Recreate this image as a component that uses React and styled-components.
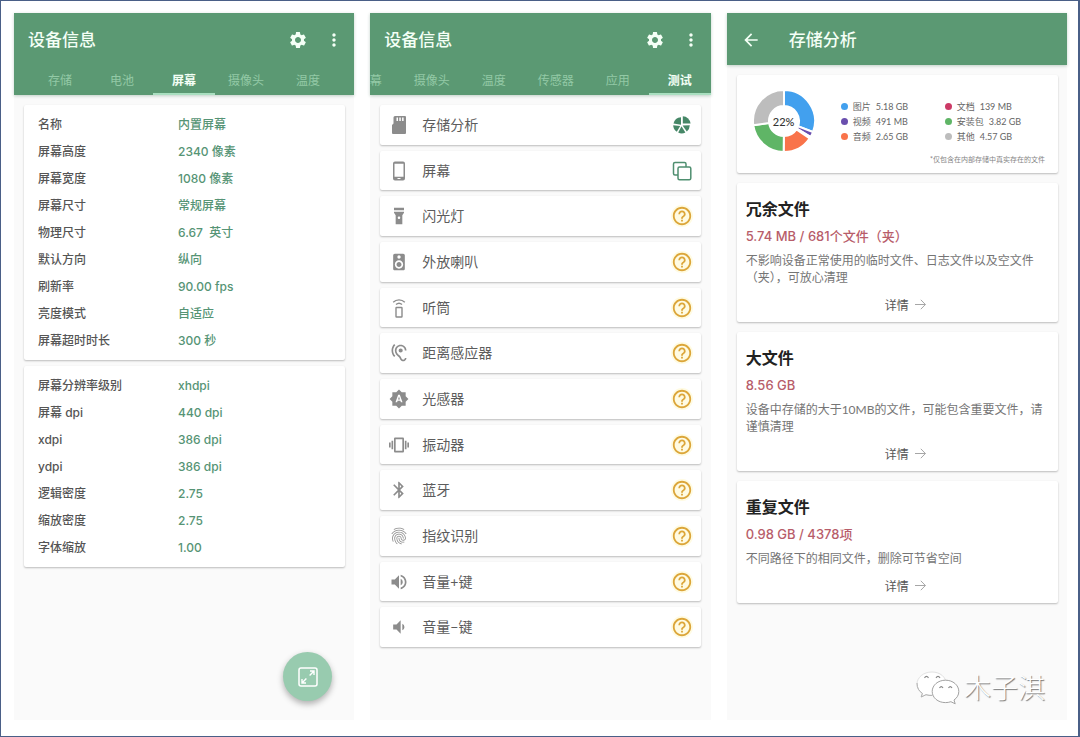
import { useState } from 'react';
import styled, { createGlobalStyle } from 'styled-components';
import {
  MdSettings,
  MdMoreVert,
  MdArrowBack,
  MdFlashlightOn,
  MdSpeaker,
  MdHearing,
  MdBrightnessAuto,
  MdVibration,
  MdBluetooth,
  MdFingerprint,
  MdVolumeUp,
  MdVolumeDown,
  MdHelpOutline,
} from 'react-icons/md';

const SdIcon = () => (
  <svg width="20" height="20" viewBox="0 0 20 20" fill="#8c8c8c" aria-hidden="true">
    <path
      fillRule="evenodd"
      d="M6 1H16Q17 1 17 2V18Q17 19 16 19H4Q3 19 3 18V10L4.500 8.500V2.500Q4.500 1 6 1ZM7.500 2.500V6H9V2.500ZM10.300 2.500V6H11.800V2.500ZM13.100 2.500V6H14.600V2.500Z"
    />
  </svg>
);

const PhoneIcon = () => (
  <svg width="20" height="20" viewBox="0 0 20 20" aria-hidden="true">
    <path
      fill="#8c8c8c"
      fillRule="evenodd"
      d="M6 .5H14Q16 .5 16 2.500V17.500Q16 19.500 14 19.500H6Q4 19.500 4 17.500V2.500Q4 .5 6 .5ZM5.500 2.800V15.800H14.500V2.800ZM8.500 17V18H11.500V17Z"
    />
  </svg>
);

const ReceiverIcon = () => (
  <svg width="20" height="20" viewBox="0 0 20 20" fill="none" stroke="#8c8c8c" aria-hidden="true">
    <rect x="7" y="9.500" width="6" height="9.500" rx="0.5" strokeWidth="1.400" />
    <path d="M7 6.600A4.500 4.500 0 0 1 13 6.600" strokeWidth="1.400" />
    <path d="M4.200 4.200A8.400 8.400 0 0 1 15.800 4.200" strokeWidth="1.400" />
  </svg>
);

const screenInfo = [
  ['名称', '内置屏幕'],
  ['屏幕高度', '2340 像素'],
  ['屏幕宽度', '1080 像素'],
  ['屏幕尺寸', '常规屏幕'],
  ['物理尺寸', '6.67  英寸'],
  ['默认方向', '纵向'],
  ['刷新率', '90.00 fps'],
  ['亮度模式', '自适应'],
  ['屏幕超时时长', '300 秒'],
];

const densityInfo = [
  ['屏幕分辨率级别', 'xhdpi'],
  ['屏幕 dpi', '440 dpi'],
  ['xdpi', '386 dpi'],
  ['ydpi', '386 dpi'],
  ['逻辑密度', '2.75'],
  ['缩放密度', '2.75'],
  ['字体缩放', '1.00'],
];

const tests = [
  { label: '存储分析', Icon: SdIcon, action: 'pie' },
  { label: '屏幕', Icon: PhoneIcon, action: 'copy' },
  { label: '闪光灯', Icon: MdFlashlightOn },
  { label: '外放喇叭', Icon: MdSpeaker },
  { label: '听筒', Icon: ReceiverIcon },
  { label: '距离感应器', Icon: MdHearing },
  { label: '光感器', Icon: MdBrightnessAuto },
  { label: '振动器', Icon: MdVibration },
  { label: '蓝牙', Icon: MdBluetooth },
  { label: '指纹识别', Icon: MdFingerprint },
  { label: '音量+键', Icon: MdVolumeUp },
  { label: '音量−键', Icon: MdVolumeDown },
];

const storage = [
  { name: '图片', size: '5.18 GB', value: 5.18, color: '#42a0ee' },
  { name: '视频', size: '491 MB', value: 0.48, color: '#6a4fae' },
  { name: '文档', size: '139 MB', value: 0.14, color: '#cc3a66' },
  { name: '音频', size: '2.65 GB', value: 2.65, color: '#f9734a' },
  { name: '安装包', size: '3.82 GB', value: 3.82, color: '#5fb566' },
  { name: '其他', size: '4.57 GB', value: 4.57, color: '#bdbdbd' },
];

const legendOrder = ['图片', '文档', '视频', '安装包', '音频', '其他'];

const cleanups = [
  {
    title: '冗余文件',
    total: '5.74 MB / 681个文件（夹）',
    text: '不影响设备正常使用的临时文件、日志文件以及空文件（夹），可放心清理',
  },
  {
    title: '大文件',
    total: '8.56 GB',
    text: '设备中存储的大于10MB的文件，可能包含重要文件，请谨慎清理',
  },
  {
    title: '重复文件',
    total: '0.98 GB / 4378项',
    text: '不同路径下的相同文件，删除可节省空间',
  },
];

const polar = (radius, angle) => {
  const rad = ((angle - 90) * Math.PI) / 180;
  return `${(32 + radius * Math.cos(rad)).toFixed(2)} ${(32 + radius * Math.sin(rad)).toFixed(2)}`;
};

const ringSlice = (from, to) => {
  const large = to - from > 180 ? 1 : 0;
  return `M${polar(31, from)} A31 31 0 ${large} 1 ${polar(31, to)} L${polar(15, to)} A15 15 0 ${large} 0 ${polar(15, from)} Z`;
};

const Donut = () => {
  const sum = storage.reduce((acc, item) => acc + item.value, 0);
  let angle = 0;
  return (
    <DonutWrapper>
      <svg width="64" height="64" viewBox="0 0 64 64" aria-hidden="true">
        {storage.map((item) => {
          const from = angle;
          angle += (item.value / sum) * 360;
          return (
            <path
              key={item.name}
              d={ringSlice(from, angle)}
              fill={item.name === '文档' ? '#fff' : item.color}
              stroke="#fff"
              strokeWidth="2"
            />
          );
        })}
      </svg>
      <DonutLabel>22%</DonutLabel>
    </DonutWrapper>
  );
};

const PieIcon = () => (
  <svg width="20" height="20" viewBox="0 0 20 20" aria-hidden="true">
    <g fill="#468767">
      <path d="M9 2.300A8 8 0 0 0 1.500 8.600L9 9.700z" />
      <path d="M10.800 1.300A8 8 0 0 1 18.600 8.600H10.800z" />
      <path d="M17.800 10.200A8 8 0 0 1 14.800 16.400L10.600 10.400z" />
      <path d="M13.400 17.500A8 8 0 0 1 6.200 17.600L9.500 11.300z" />
      <path d="M4.800 16.800A8 8 0 0 1 1.200 10.200L8.200 11z" />
    </g>
  </svg>
);

const CopyIcon = () => (
  <svg width="20" height="20" viewBox="0 0 20 20" stroke="#4f8f70" strokeWidth="1.500" aria-hidden="true">
    <rect x="1.500" y="1.500" width="12.500" height="12.500" rx="1.500" fill="none" />
    <rect x="6" y="6" width="12.800" height="12.800" rx="1.500" fill="#fff" />
  </svg>
);

const ExpandIcon = () => (
  <svg width="20" height="20" viewBox="0 0 20 20" fill="none" stroke="#fff" aria-hidden="true">
    <rect x="1" y="1" width="18" height="18" rx="2" strokeWidth="1.500" />
    <path d="M12 4H16V8M16 4L11.600 8.400" strokeWidth="1.400" />
    <path d="M4 12V16H8M4 16L8.400 11.600" strokeWidth="1.400" />
  </svg>
);

const ThinArrow = () => (
  <svg width="11" height="11" viewBox="0 0 11 11" fill="none" stroke="#a6a6a6" aria-hidden="true">
    <path d="M0 5.500H10.400M5.800 0.800L10.400 5.500L5.800 10.200" />
  </svg>
);

const WechatIcon = () => (
  <svg width="44" height="34" viewBox="0 0 44 34" fill="#fff" stroke="#b0b0b0" aria-hidden="true">
    <path
      d="M16 1C7.500 1 1 6.400 1 13.200C1 17 3 20.200 6.400 22.400L5.200 26L10 23.700C12 24.300 14 24.500 16 24.400C24 24 30 19 30.200 13C30.200 6 24 1 16 1Z"
      stroke="#e2e2e2"
    />
    <path d="M1 12C1 17 3 20.200 6.400 22.400L5.200 26L10 23.700C12 24.300 14 24.500 16 24.400" fill="none" />
    <path
      d="M29.500 9.200C22 9.200 16.200 14.200 16.200 20.400C16.200 26.800 22 31.600 29.500 31.600C31.400 31.600 33.200 31.300 34.900 30.700L39.200 32.800L38 29C41 27 42.800 24 42.800 20.400C42.800 14.200 37 9.200 29.500 9.200Z"
      stroke="#a2a2a2"
    />
    <g fill="none" stroke="#888" strokeWidth="1.200">
      <path d="M8.500 6.800Q10.500 4 12.500 6.800M20 6.800Q22 4 24 6.800" />
      <path d="M23.500 17Q25.300 14.400 27 17M32.500 17Q34.300 14.400 36 17" />
    </g>
  </svg>
);

const AppHeader = ({ tabs, initial, scrolled }) => {
  const [active, setActive] = useState(initial);
  return (
    <Header>
      <TitleBar>
        <Title>设备信息</Title>
        <IconButton aria-label="设置">
          <MdSettings size={20} />
        </IconButton>
        <IconButton aria-label="更多">
          <MdMoreVert size={20} />
        </IconButton>
      </TitleBar>
      <Tabs $scrolled={scrolled}>
        {tabs.map((tab) => (
          <Tab key={tab} $active={tab === active} onClick={() => setActive(tab)}>
            {tab}
          </Tab>
        ))}
      </Tabs>
    </Header>
  );
};

const InfoCard = ({ rows }) => (
  <InfoBox>
    <InfoTable>
      <tbody>
        {rows.map(([name, value]) => (
          <tr key={name}>
            <InfoName scope="row">{name}</InfoName>
            <InfoValue>{value}</InfoValue>
          </tr>
        ))}
      </tbody>
    </InfoTable>
  </InfoBox>
);

const TestAction = ({ action }) => {
  if (action === 'pie') return <PieIcon />;
  if (action === 'copy') return <CopyIcon />;
  return <HelpIcon size={22} />;
};

const App = () => {
  return (
    <>
      <GlobalStyle />
      <Page>
        <Screen>
          <AppHeader tabs={['存储', '电池', '屏幕', '摄像头', '温度']} initial="屏幕" />
          <Body $gap={6}>
            <InfoCard rows={screenInfo} />
            <InfoCard rows={densityInfo} />
          </Body>
          <Fab aria-label="全屏">
            <ExpandIcon />
          </Fab>
        </Screen>

        <Screen>
          <AppHeader
            tabs={['屏幕', '摄像头', '温度', '传感器', '应用', '测试']}
            initial="测试"
            scrolled
          />
          <TestList>
            {tests.map(({ label, Icon, action }) => (
              <TestItem key={label}>
                <TestButton>
                  <Icon size={20} color="#8c8c8c" />
                  <TestLabel>{label}</TestLabel>
                  <TestAction action={action} />
                </TestButton>
              </TestItem>
            ))}
          </TestList>
        </Screen>

        <Screen>
          <Header>
            <TitleBar>
              <BackButton aria-label="返回">
                <MdArrowBack size={20} />
              </BackButton>
              <Title>存储分析</Title>
            </TitleBar>
          </Header>
          <Body $gap={10}>
            <ChartCard>
              <ChartRow>
                <Donut />
                <Legend>
                  {legendOrder.map((name) => {
                    const item = storage.find((s) => s.name === name);
                    return (
                      <LegendItem key={name}>
                        <Dot $color={item.color} />
                        <span>{item.name}</span>
                        <span>{item.size}</span>
                      </LegendItem>
                    );
                  })}
                </Legend>
              </ChartRow>
              <Note>*仅包含在内部存储中真实存在的文件</Note>
            </ChartCard>
            {cleanups.map((item) => (
              <CleanCard key={item.title}>
                <CleanTitle>{item.title}</CleanTitle>
                <CleanTotal>{item.total}</CleanTotal>
                <CleanText>{item.text}</CleanText>
                <DetailButton>
                  详情
                  <ThinArrow />
                </DetailButton>
              </CleanCard>
            ))}
          </Body>
          <Watermark>
            <WechatIcon />
            <span>木子淇</span>
          </Watermark>
        </Screen>
      </Page>
    </>
  );
};

export default App;

const GlobalStyle = createGlobalStyle`
  * {
    box-sizing: border-box;
  }

  body {
    margin: 0;
    background: #fff;
    font-family: Lato, "Noto Sans CJK SC", sans-serif;
    color: #555;
  }

  button {
    padding: 0;
    border: none;
    background: none;
    font-family: inherit;
    color: inherit;
    cursor: pointer;
  }
`;

const Page = styled.main`
  display: grid;
  grid-template-columns: repeat(3, minmax(0, 1fr));
  gap: 16px;
  min-height: 100vh;
  padding: 12px 11px 16px 13px;
  border: 1px solid #4a5f87;
  border-right-width: 2px;
`;

const Screen = styled.section`
  position: relative;
  display: flex;
  flex-direction: column;
  background: #fafafa;
`;

const Header = styled.header`
  background: #5b9973;
  color: #f4fff6;
  box-shadow: 0 1px 3px rgba(60, 110, 80, 0.3);
`;

const TitleBar = styled.div`
  display: flex;
  align-items: center;
  height: 52px;
  padding: 2px 10px 0 14px;
`;

const Title = styled.h1`
  flex: 1;
  margin: 0;
  font-size: 17px;
  font-weight: 500;
  line-height: 24px;
`;

const IconButton = styled.button`
  display: flex;
  justify-content: center;
  width: 20px;
  margin-left: 16px;
`;

const BackButton = styled.button`
  display: flex;
  width: 20px;
  margin-right: 28px;
`;

const Tabs = styled.nav`
  display: flex;
  justify-content: ${(props) => (props.$scrolled ? 'flex-end' : 'flex-start')};
  padding-left: ${(props) => (props.$scrolled ? '0' : '15px')};
  overflow: hidden;
`;

const Tab = styled.button`
  flex: 0 0 62px;
  height: 30px;
  border-bottom: 2px solid ${(props) => (props.$active ? '#a9dfc0' : 'transparent')};
  font-size: 12px;
  font-weight: ${(props) => (props.$active ? 700 : 400)};
  color: ${(props) => (props.$active ? '#f4fff6' : '#93c9a6')};
`;

const Body = styled.div`
  display: flex;
  flex-direction: column;
  gap: ${(props) => props.$gap}px;
  padding: 10px 9px 10px 10px;
`;

const Card = styled.section`
  background: #fff;
  border-radius: 2px;
  box-shadow: 0 1px 2px rgba(0, 0, 0, 0.25);
`;

const InfoBox = styled(Card)`
  padding: 6px 14px;
`;

const InfoTable = styled.table`
  width: 100%;
  border-collapse: collapse;
  table-layout: fixed;
  font-family: Inter, "Noto Sans CJK SC", sans-serif;
  font-size: 12px;
  line-height: 27px;
`;

const InfoName = styled.th`
  width: 140px;
  padding: 0;
  text-align: left;
  font-weight: 500;
  color: #555;
`;

const InfoValue = styled.td`
  padding: 0;
  font-weight: 500;
  color: #569475;
  white-space: pre;
`;

const Fab = styled.button`
  position: absolute;
  right: 22px;
  bottom: 19px;
  display: flex;
  align-items: center;
  justify-content: center;
  width: 49px;
  height: 49px;
  border-radius: 50%;
  background: #98cbaf;
  box-shadow: 0 3px 6px rgba(0, 0, 0, 0.3);
`;

const TestList = styled.ul`
  flex: 1;
  display: flex;
  flex-direction: column;
  gap: 6px;
  margin: 0;
  padding: 10px 10px 73px 10px;
  list-style: none;
`;

const TestItem = styled.li`
  flex: 1;
  display: flex;
  background: #fff;
  border-radius: 2px;
  box-shadow: 0 1px 2px rgba(0, 0, 0, 0.25);
`;

const TestButton = styled.button`
  flex: 1;
  display: flex;
  align-items: center;
  padding: 0 9px;
`;

const TestLabel = styled.span`
  flex: 1;
  margin-left: 13px;
  text-align: left;
  font-size: 14px;
  line-height: 20px;
  color: #5c5c5c;
`;

const HelpIcon = styled(MdHelpOutline)`
  margin-right: -1px;
  color: #dca63a;
  border-radius: 50%;
  background: #fffbe2;
`;

const ChartCard = styled(Card)`
  padding: 14px 13px 7px;
`;

const ChartRow = styled.div`
  display: flex;
  align-items: center;
`;

const DonutWrapper = styled.div`
  display: grid;
  place-items: center;
  margin-left: 2px;

  & > * {
    grid-area: 1 / 1;
  }
`;

const DonutLabel = styled.span`
  font-size: 11px;
  font-weight: 500;
  color: #333;
`;

const Legend = styled.ul`
  flex: 1;
  display: grid;
  grid-template-columns: 104px 1fr;
  margin: 0;
  padding: 0 0 0 25px;
  list-style: none;
`;

const LegendItem = styled.li`
  display: flex;
  align-items: center;
  gap: 5px;
  font-size: 9px;
  line-height: 15px;
  color: #666;
`;

const Dot = styled.i`
  width: 7px;
  height: 7px;
  border-radius: 50%;
  background: ${(props) => props.$color};
`;

const Note = styled.p`
  margin: 0;
  text-align: right;
  font-size: 7px;
  line-height: 13px;
  color: #858585;
`;

const CleanCard = styled(Card)`
  padding: 14px 9px 0;
`;

const CleanTitle = styled.h2`
  margin: 0;
  font-size: 16px;
  font-weight: 700;
  line-height: 24px;
  color: #222;
`;

const CleanTotal = styled.p`
  margin: 4px 0 5px;
  font-family: Inter, "Noto Sans CJK SC", sans-serif;
  font-size: 13px;
  font-weight: 500;
  line-height: 22px;
  color: #b85d6a;
`;

const CleanText = styled.p`
  margin: 0;
  font-size: 12px;
  line-height: 17px;
  color: #757575;
`;

const DetailButton = styled.button`
  display: flex;
  align-items: center;
  justify-content: center;
  gap: 6px;
  width: 100%;
  height: 36px;
  padding-left: 16px;
  font-size: 12px;
  color: #555;
`;

const Watermark = styled.div`
  display: flex;
  align-items: center;
  justify-content: flex-end;
  gap: 4px;
  margin-top: auto;
  padding: 0 22px 12px 0;
  font-size: 27px;
  font-weight: 300;
  line-height: 40px;
  color: #fff;
  text-shadow: 1px 1px 1px #777;
`;
